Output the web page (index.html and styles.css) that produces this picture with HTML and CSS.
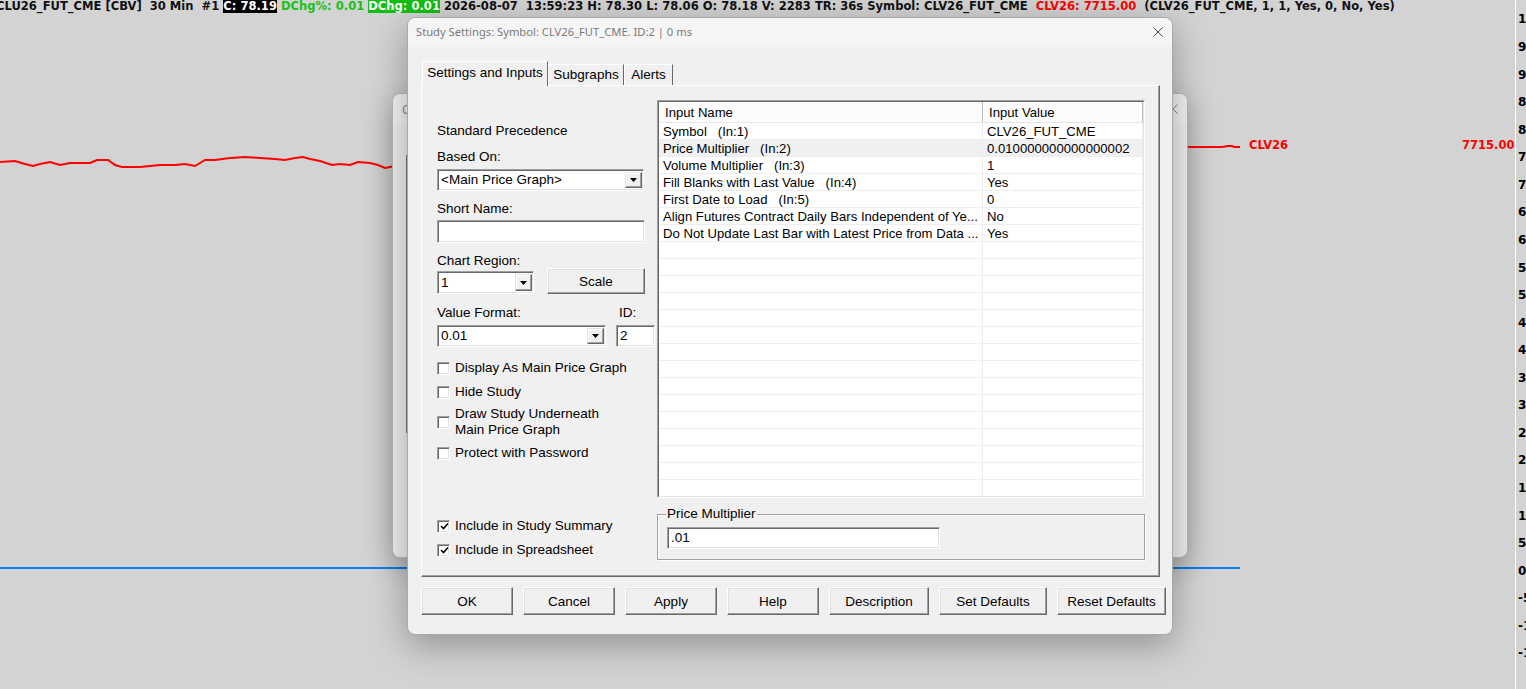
FILE: index.html
```html
<!DOCTYPE html>
<html>
<head>
<meta charset="utf-8">
<link rel="stylesheet" href="styles.css">
</head>
<body>
<div class="screen">
  <div class="topbar"><span>CLU26_FUT_CME [CBV]  30 Min  #1 </span><span class="blk">C: 78.19</span> <span class="grn">DChg%: 0.01</span> <span class="gbg">DChg: 0.01</span> 2026-08-07  13:59:23 H: 78.30 L: 78.06 O: 78.18 V: 2283 TR: 36s Symbol: CLV26_FUT_CME  <span class="red">CLV26: 7715.00</span>  (CLV26_FUT_CME, 1, 1, Yes, 0, No, Yes)</div>

  <svg class="chart" width="1526" height="689" viewBox="0 0 1526 689">
    <polyline fill="none" stroke="#ff0000" stroke-width="2" points="0,162 15,161 25,164 33,166 40,164 50,162 60,165 70,163 90,163 97,160 108,160 115,165 122,167 140,167 150,166 160,165 175,165 185,164 195,166 205,160 215,160 230,158 245,157 260,158 275,159 285,160 295,158 303,157 310,159 320,161 332,165 340,164 350,165 358,162 370,163 378,165 385,168 395,166"/>
    <polyline fill="none" stroke="#ff0000" stroke-width="2" points="1186,147 1210,147 1222,147 1228,146 1232,146 1234,147 1240,147"/>
    <line x1="0" y1="568" x2="1240" y2="568" stroke="#0a7ef5" stroke-width="2"/>
  </svg>
  <div class="chart-label clv">CLV26</div>
  <div class="chart-label price">7715.00</div>

  <div class="axis">
    <div class="tick">100.00</div><div class="tick">95.00</div><div class="tick">90.00</div><div class="tick">85.00</div>
    <div class="tick">80.00</div><div class="tick">75.00</div><div class="tick">70.00</div><div class="tick">65.00</div>
    <div class="tick">60.00</div><div class="tick">55.00</div><div class="tick">50.00</div><div class="tick">45.00</div>
    <div class="tick">40.00</div><div class="tick">35.00</div><div class="tick">30.00</div><div class="tick">25.00</div>
    <div class="tick">20.00</div><div class="tick">15.00</div><div class="tick">10.00</div><div class="tick">5.00</div>
    <div class="tick">0.00</div><div class="tick">-5.00</div><div class="tick">-10.00</div><div class="tick">-15.00</div>
  </div>

  <div class="window back">
    <div class="back-title"><span>Chart Settings</span>
      <svg class="xicon light" width="10" height="10" viewBox="0 0 10 10"><path d="M0.5 0.5 L9.5 9.5 M9.5 0.5 L0.5 9.5"/></svg>
    </div>
    <div class="back-body"><div class="back-list"></div></div>
  </div>

  <div class="window dialog">
    <div class="titlebar">
      <span class="title">Study Settings: Symbol: CLV26_FUT_CME. ID:2 | 0 ms</span>
      <svg class="xicon" width="10" height="10" viewBox="0 0 10 10"><path d="M0.5 0.5 L9.5 9.5 M9.5 0.5 L0.5 9.5"/></svg>
    </div>
    <div class="dbody">
      <div class="tabs">
        <div class="tab active">Settings and Inputs</div>
        <div class="tab t2">Subgraphs</div>
        <div class="tab t3">Alerts</div>
      </div>
      <div class="panel">
        <div class="leftcol">
          <div class="lbl">Standard Precedence</div>
          <div class="lbl m10">Based On:</div>
          <div class="combo w206 m5"><span class="ctext">&lt;Main Price Graph&gt;</span><span class="dbtn"><svg width="7" height="4" viewBox="0 0 7 4"><path d="M0 0 H7 L3.5 4 Z"/></svg></span></div>
          <div class="lbl m9">Short Name:</div>
          <div class="edit w207 m4"></div>
          <div class="lbl m9">Chart Region:</div>
          <div class="row h26">
            <div class="combo w96 m3"><span class="ctext">1</span><span class="dbtn"><svg width="7" height="4" viewBox="0 0 7 4"><path d="M0 0 H7 L3.5 4 Z"/></svg></span></div>
            <div class="btn scale">Scale</div>
          </div>
          <div class="row m10 lblrow"><span class="lbl vflbl">Value Format:</span><span class="lbl">ID:</span></div>
          <div class="row m5">
            <div class="combo w168"><span class="ctext">0.01</span><span class="dbtn"><svg width="7" height="4" viewBox="0 0 7 4"><path d="M0 0 H7 L3.5 4 Z"/></svg></span></div>
            <div class="edit idbox"><span class="ctext">2</span></div>
          </div>
          <div class="chk c1"><span class="box"></span><span>Display As Main Price Graph</span></div>
          <div class="chk c2"><span class="box"></span><span>Hide Study</span></div>
          <div class="chk c3"><span class="box"></span><span>Draw Study Underneath<br>Main Price Graph</span></div>
          <div class="chk c4"><span class="box"></span><span>Protect with Password</span></div>
          <div class="chk c5"><span class="box"><svg width="9" height="9" viewBox="0 0 9 9"><path d="M1 4 L3.5 6.5 L8 1.5" fill="none" stroke="#000" stroke-width="1.6"/></svg></span><span>Include in Study Summary</span></div>
          <div class="chk c6"><span class="box"><svg width="9" height="9" viewBox="0 0 9 9"><path d="M1 4 L3.5 6.5 L8 1.5" fill="none" stroke="#000" stroke-width="1.6"/></svg></span><span>Include in Spreadsheet</span></div>
        </div>
        <div class="rightcol">
          <div class="grid">
            <div class="grid-in">
              <div class="ghead"><div class="hc1">Input Name</div><div class="hc2">Input Value</div></div>
              <div class="grow"><div class="gc1">Symbol&nbsp;&nbsp;&nbsp;(In:1)</div><div class="gc2">CLV26_FUT_CME</div></div>
              <div class="grow sel"><div class="gc1">Price Multiplier&nbsp;&nbsp;&nbsp;(In:2)</div><div class="gc2">0.010000000000000002</div></div>
              <div class="grow"><div class="gc1">Volume Multiplier&nbsp;&nbsp;&nbsp;(In:3)</div><div class="gc2">1</div></div>
              <div class="grow"><div class="gc1">Fill Blanks with Last Value&nbsp;&nbsp;&nbsp;(In:4)</div><div class="gc2">Yes</div></div>
              <div class="grow"><div class="gc1">First Date to Load&nbsp;&nbsp;&nbsp;(In:5)</div><div class="gc2">0</div></div>
              <div class="grow"><div class="gc1">Align Futures Contract Daily Bars Independent of Ye...</div><div class="gc2">No</div></div>
              <div class="grow"><div class="gc1">Do Not Update Last Bar with Latest Price from Data ...</div><div class="gc2">Yes</div></div>
              <div class="grow"><div class="gc1"></div><div class="gc2"></div></div>
              <div class="grow"><div class="gc1"></div><div class="gc2"></div></div>
              <div class="grow"><div class="gc1"></div><div class="gc2"></div></div>
              <div class="grow"><div class="gc1"></div><div class="gc2"></div></div>
              <div class="grow"><div class="gc1"></div><div class="gc2"></div></div>
              <div class="grow"><div class="gc1"></div><div class="gc2"></div></div>
              <div class="grow"><div class="gc1"></div><div class="gc2"></div></div>
              <div class="grow"><div class="gc1"></div><div class="gc2"></div></div>
              <div class="grow"><div class="gc1"></div><div class="gc2"></div></div>
              <div class="grow"><div class="gc1"></div><div class="gc2"></div></div>
              <div class="grow"><div class="gc1"></div><div class="gc2"></div></div>
              <div class="grow"><div class="gc1"></div><div class="gc2"></div></div>
              <div class="grow"><div class="gc1"></div><div class="gc2"></div></div>
              <div class="grow"><div class="gc1"></div><div class="gc2"></div></div>
              <div class="grow"><div class="gc1"></div><div class="gc2"></div></div>
            </div>
          </div>
          <fieldset class="group">
            <legend>Price Multiplier</legend>
            <div class="edit pmbox"><span class="ctext">.01</span></div>
          </fieldset>
        </div>
      </div>
      <div class="buttons">
        <div class="btn bw92">OK</div>
        <div class="btn bw92">Cancel</div>
        <div class="btn bw92">Apply</div>
        <div class="btn bw92">Help</div>
        <div class="btn bw100">Description</div>
        <div class="btn bw108">Set Defaults</div>
        <div class="btn bw109">Reset Defaults</div>
      </div>
    </div>
  </div>
</div>
</body>
</html>
```

FILE: styles.css
```css
html, body {
  margin: 0;
  padding: 0;
  background: #d3d3d3;
  overflow: hidden;
}
.screen {
  position: relative;
  width: 1526px;
  height: 689px;
  overflow: hidden;
  background: #d3d3d3;
}
.topbar {
  position: absolute;
  left: -4px;
  top: -1px;
  white-space: pre;
  font-family: "DejaVu Sans", sans-serif;
  font-weight: bold;
  font-size: 11.55px;
  line-height: 14px;
  color: #111;
}
.topbar .blk { background: #000; color: #fff; }
.topbar .grn { color: #16c216; }
.topbar .gbg { background: #10c010; color: #fff; }
.topbar .red { color: #ff0000; }

.chart { position: absolute; left: 0; top: 0; }
.chart-label {
  position: absolute;
  font-family: "DejaVu Sans", sans-serif;
  font-weight: bold;
  font-size: 11.5px;
  line-height: 14px;
  color: #ff0000;
}
.chart-label.clv { left: 1249px; top: 138px; }
.chart-label.price { left: 1462px; top: 138px; }

.axis {
  position: absolute;
  left: 1515px;
  top: 0;
  width: 30px;
  height: 689px;
  border-left: 1px solid #ffffff;
  padding-top: 5.7px;
  box-sizing: border-box;
}
.tick {
  height: 27.57px;
  display: flex;
  align-items: center;
  font-family: "DejaVu Sans", sans-serif;
  font-weight: bold;
  font-size: 12px;
  color: #000;
  white-space: nowrap;
}
.tick::before {
  content: "";
  width: 3px;
  height: 1px;
  background: #ffffff;
  margin-right: 2px;
}

.window {
  position: absolute;
  box-sizing: border-box;
  background: #f0f0f0;
  border-radius: 8px;
}
.back {
  left: 392px;
  top: 93px;
  width: 796px;
  height: 465px;
  border: 1px solid #b9b9b9;
  box-shadow: 0 8px 30px rgba(0, 0, 0, 0.28);
}
.back-title {
  height: 30px;
  display: flex;
  align-items: center;
  justify-content: space-between;
  padding: 0 9px 0 9px;
  font-family: "Noto Sans", sans-serif;
  font-size: 12px;
  color: #8a8a8a;
  background: #f4f4f4;
  border-radius: 8px 8px 0 0;
}
.back-body { padding: 31px 0 0 13px; }
.back-list {
  width: 200px;
  height: 278px;
  border-left: 1px solid #7a7a7a;
}
.xicon path { stroke: #444; stroke-width: 1; fill: none; }
.xicon.light path { stroke: #888; }

.dialog {
  left: 407px;
  top: 17px;
  width: 766px;
  height: 618px;
  border: 1px solid #a9a9a9;
  box-shadow: 0 10px 36px rgba(0, 0, 0, 0.32);
  font-family: "Liberation Sans", Arial, sans-serif;
  font-size: 13.5px;
  color: #000;
}
.titlebar {
  height: 27px;
  display: flex;
  align-items: center;
  justify-content: space-between;
  padding: 0 9px 0 8px;
  background: #f5f5f5;
  border-radius: 8px 8px 0 0;
}
.title {
  font-family: "Noto Sans", sans-serif;
  font-size: 11.2px;
  color: #7a7a7a;
}
.dbody { padding: 16px 13px 0 13px; }

.tabs {
  display: flex;
  align-items: flex-end;
  height: 24px;
  padding-left: 1px;
  position: relative;
  z-index: 2;
}
.tab {
  box-sizing: border-box;
  height: 21px;
  line-height: 20px;
  text-align: center;
  border: 1px solid;
  border-color: #ffffff #696969 transparent #ffffff;
  border-bottom: none;
  background: #f0f0f0;
  white-space: nowrap;
  flex: none;
}
.tab.active {
  width: 126px;
  height: 25px;
  line-height: 21px;
  margin-bottom: -1px;
}
.tab.t2 { width: 76px; }
.tab.t3 { width: 49px; }

.panel {
  box-sizing: border-box;
  width: 739px;
  height: 492px;
  border: 1px solid;
  border-color: #ffffff #696969 #696969 #ffffff;
  box-shadow: inset -1px -1px 0 #a0a0a0;
  display: flex;
  padding: 14px 14px 0 15px;
}
.leftcol {
  width: 220px;
  flex: none;
  display: flex;
  flex-direction: column;
  align-items: flex-start;
  padding-top: 22px;
}
.lbl { line-height: 18px; height: 16px; white-space: nowrap; }
.m3 { margin-top: 3px; }
.m4 { margin-top: 4px; }
.m5 { margin-top: 5px; }
.m9 { margin-top: 9px; }
.m10 { margin-top: 10px; }
.row { display: flex; align-items: flex-start; }
.h26 { height: 26px; }
.lblrow { width: 220px; }
.vflbl { width: 182px; }

.combo, .edit {
  box-sizing: border-box;
  background: #fff;
  border: 1px solid;
  border-color: #a0a0a0 #ffffff #ffffff #a0a0a0;
  box-shadow: inset 1px 1px 0 #696969, inset -1px -1px 0 #e3e3e3;
  display: flex;
  align-items: center;
  justify-content: space-between;
  flex: none;
}
.combo { height: 22px; }
.ctext { padding-left: 3px; line-height: 16px; white-space: nowrap; }
.w206 { width: 207px; }
.w207 { width: 208px; height: 23px; }
.w96 { width: 97px; height: 23px; }
.w168 { width: 169px; }
.dbtn {
  box-sizing: border-box;
  width: 17px;
  margin: 2px 1px 2px 0;
  border: 1px solid;
  border-color: #e3e3e3 #696969 #696969 #e3e3e3;
  box-shadow: inset -1px -1px 0 #a0a0a0, inset 1px 1px 0 #ffffff;
  background: #f0f0f0;
  display: flex;
  align-items: center;
  justify-content: center;
  align-self: stretch;
}
.dbtn svg path { fill: #000; }
.idbox { width: 39px; height: 22px; margin-left: 10px; }

.btn {
  box-sizing: border-box;
  border: 1px solid;
  border-color: #ffffff #696969 #696969 #ffffff;
  box-shadow: inset -1px -1px 0 #a0a0a0, inset 1px 1px 0 #e3e3e3;
  background: #f0f0f0;
  display: flex;
  align-items: center;
  justify-content: center;
  white-space: nowrap;
  flex: none;
}
.btn.scale { width: 98px; height: 26px; margin-left: 13px; }

.chk {
  display: flex;
  align-items: center;
  line-height: 16px;
  white-space: nowrap;
}
.chk .box {
  box-sizing: border-box;
  width: 13px;
  height: 13px;
  border: 1px solid;
  border-color: #a0a0a0 #ffffff #ffffff #a0a0a0;
  box-shadow: inset 1px 1px 0 #696969, inset -1px -1px 0 #e3e3e3;
  background: #fff;
  margin-right: 5px;
  display: flex;
  align-items: center;
  justify-content: center;
  flex: none;
}
.chk .box svg { margin-left: 1px; margin-top: 1px; }
.c1 { margin-top: 13px; }
.c2 { margin-top: 8px; }
.c3 { margin-top: 6px; }
.c4 { margin-top: 7px; }
.c5 { margin-top: 57px; }
.c6 { margin-top: 8px; }

.rightcol { width: 488px; flex: none; }
.grid {
  box-sizing: border-box;
  width: 488px;
  height: 398px;
  border: 1px solid;
  border-color: #a0a0a0 #ffffff #ffffff #a0a0a0;
  background: #fff;
  font-size: 13.15px;
}
.grid-in {
  box-sizing: border-box;
  height: 100%;
  border: 1px solid;
  border-color: #696969 #e3e3e3 #e3e3e3 #696969;
  overflow: hidden;
}
.ghead {
  display: flex;
  height: 21px;
  box-sizing: border-box;
  border-bottom: 1px solid #e5e5e5;
  background: #fcfcfc;
}
.hc1, .hc2 {
  box-sizing: border-box;
  height: 20px;
  line-height: 21px;
  padding-left: 6px;
  border-right: 1px solid #bdbdbd;
  box-shadow: 1px 0 0 #ffffff;
  white-space: nowrap;
}
.hc1 { width: 324px; }
.hc2 { width: 160px; }
.grow {
  display: flex;
  height: 17px;
  box-sizing: border-box;
  border-bottom: 1px solid #eeeeee;
}
.grow.sel { background: #f0f0f0; }
.gc1, .gc2 {
  box-sizing: border-box;
  height: 16px;
  line-height: 18px;
  white-space: nowrap;
  border-right: 1px solid #eeeeee;
}
.gc1 { width: 324px; padding-left: 4px; }
.gc2 { width: 160px; padding-left: 4px; }

.group {
  margin: 8px 0 0 0;
  padding: 0 0 10px 9px;
  border: 1px solid #a0a0a0;
  box-shadow: inset 1px 1px 0 #ffffff, 1px 1px 0 #ffffff;
  min-width: 0;
  height: 54px;
  box-sizing: border-box;
}
.group legend {
  padding: 0 1px;
  line-height: 16px;
  margin-left: -1px;
}
.pmbox { width: 273px; height: 22px; margin-top: 5px; }

.buttons {
  display: flex;
  gap: 10px;
  margin-top: 10px;
}
.buttons .btn { height: 28px; }
.bw92 { width: 92px; }
.bw100 { width: 100px; }
.bw108 { width: 108px; }
.bw109 { width: 109px; }
```
